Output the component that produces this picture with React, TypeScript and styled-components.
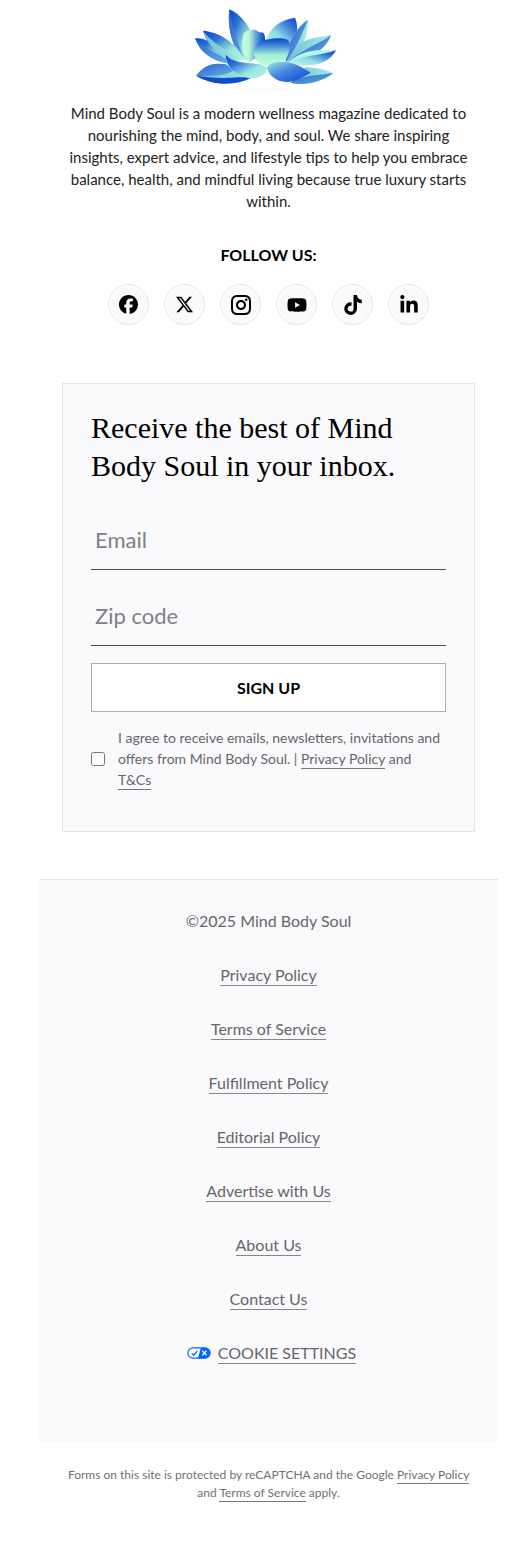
import React from 'react';
import styled, { createGlobalStyle } from 'styled-components';
import { FaFacebook, FaYoutube, FaTiktok, FaLinkedinIn } from 'react-icons/fa6';
import { BsTwitterX } from 'react-icons/bs';
import { RiInstagramLine } from 'react-icons/ri';

const GlobalStyle = createGlobalStyle`
  * { box-sizing: border-box; }
  body {
    margin: 0;
    background: #fff;
    color: #111;
    font-family: Lato, "Open Sans", sans-serif;
  }
`;

const Page = styled.div`
  padding: 8px 34px 45px 39px;
`;

const Intro = styled.header`
  display: flex;
  flex-direction: column;
  align-items: center;
  padding: 0 23px;
`;

const Logo = styled.svg`
  display: block;
  width: 160px;
  height: 86px;
`;

const About = styled.p`
  margin: 8px 0 0;
  font-size: 15px;
  line-height: 22px;
  text-align: center;
  color: #222;
`;

const FollowTitle = styled.h2`
  margin: 32px 0 0;
  font-size: 16px;
  line-height: 22px;
  font-weight: 700;
  color: #000;
`;

const Socials = styled.nav`
  display: flex;
  flex-wrap: wrap;
  justify-content: center;
  gap: 15px;
  margin-top: 18px;
`;

const SocialLink = styled.a`
  display: flex;
  align-items: center;
  justify-content: center;
  width: 41px;
  height: 41px;
  border: 1px solid #e8e8ec;
  border-radius: 50%;
  background: #fafafc;
  color: #000;
`;

const SignupCard = styled.form`
  margin: 58px 23px 0;
  padding: 25px 28px 41px;
  border: 1px solid #e6e6ea;
  background: #fafafc;
`;

const CardTitle = styled.h2`
  margin: 0 0 25px;
  font-family: "Liberation Serif", "Times New Roman", serif;
  font-size: 30px;
  line-height: 38px;
  font-weight: 400;
  color: #000;
`;

const Field = styled.input`
  display: block;
  width: 100%;
  height: 60px;
  margin-top: 16px;
  padding: 0 4px;
  border: 0;
  border-bottom: 1px solid #4c4c50;
  border-radius: 0;
  background: transparent;
  font: 400 22px Lato, sans-serif;
  color: #222;
  outline-offset: 2px;

  &::placeholder {
    color: #808084;
    opacity: 1;
  }
`;

const SubmitButton = styled.button`
  display: block;
  width: 100%;
  height: 49px;
  margin-top: 17px;
  padding: 0;
  border: 1px solid #aeaeb2;
  background: #fff;
  font: 700 16px Lato, sans-serif;
  color: #000;
  cursor: pointer;
`;

const Consent = styled.div`
  display: flex;
  align-items: center;
  gap: 13px;
  margin-top: 15px;
  font-size: 14px;
  line-height: 21px;
  color: #66666a;
`;

const Checkbox = styled.input`
  flex: none;
  width: 14px;
  height: 14px;
  margin: 0;
`;

const TextLink = styled.a`
  padding-bottom: 1px;
  border-bottom: 1px solid #77777b;
  color: inherit;
  text-decoration: none;
`;

const Legal = styled.footer`
  display: flex;
  flex-direction: column;
  align-items: center;
  gap: 32px;
  margin-top: 47px;
  padding: 30px 0 78px;
  border-top: 1px solid #e6e6ea;
  background: #fafafc;
  font-size: 16px;
  line-height: 22px;
  color: #66666a;
`;

const LegalLink = styled.a`
  border-bottom: 1px solid #88888c;
  line-height: 21px;
  color: inherit;
  text-decoration: none;
`;

const CookieRow = styled.div`
  display: flex;
  align-items: center;
  gap: 7px;
  padding-left: 6px;
`;

const Captcha = styled.p`
  margin: 24px 23px 0;
  font-size: 12px;
  line-height: 18px;
  text-align: center;
  color: #707074;
`;

const socials = [
  { name: 'Facebook', icon: <FaFacebook size={19} /> },
  { name: 'X', icon: <BsTwitterX size={17} /> },
  { name: 'Instagram', icon: <RiInstagramLine size={24} /> },
  { name: 'YouTube', icon: <FaYoutube size={20} /> },
  { name: 'TikTok', icon: <FaTiktok size={20} /> },
  { name: 'LinkedIn', icon: <FaLinkedinIn size={20} /> },
];

const legalLinks = [
  'Privacy Policy',
  'Terms of Service',
  'Fulfillment Policy',
  'Editorial Policy',
  'Advertise with Us',
  'About Us',
  'Contact Us',
];

function Lotus() {
  return (
    <Logo viewBox="12 24 480 258" role="img" aria-label="Mind Body Soul">
      <defs>
        <linearGradient id="down" x1="0" y1="0" x2="0" y2="1">
          <stop offset="0" stopColor="#0844d2" />
          <stop offset=".25" stopColor="#3f82d8" />
          <stop offset=".6" stopColor="#a5eed9" />
          <stop offset="1" stopColor="#c2ffda" />
        </linearGradient>
        <linearGradient id="right" x1="0" y1="0" x2="1" y2="0">
          <stop offset="0" stopColor="#c6ffdc" />
          <stop offset=".3" stopColor="#b9f4da" />
          <stop offset=".75" stopColor="#397bd7" />
          <stop offset="1" stopColor="#0740d0" />
        </linearGradient>
        <linearGradient id="fallRight" x1="0" y1="0" x2="1" y2="1">
          <stop offset="0" stopColor="#0743d2" />
          <stop offset=".3" stopColor="#2d70d7" />
          <stop offset=".65" stopColor="#9be5e0" />
          <stop offset="1" stopColor="#b4f4e2" />
        </linearGradient>
        <linearGradient id="riseRight" x1="0" y1="1" x2="1" y2="0">
          <stop offset="0" stopColor="#b4fae4" />
          <stop offset=".4" stopColor="#92dde4" />
          <stop offset=".75" stopColor="#3478d8" />
          <stop offset="1" stopColor="#0743d2" />
        </linearGradient>
        <linearGradient id="lowRight" x1="0" y1="0" x2="1" y2="1">
          <stop offset="0" stopColor="#9be8e8" />
          <stop offset=".45" stopColor="#4286dc" />
          <stop offset="1" stopColor="#0743d2" />
        </linearGradient>
        <linearGradient id="shade" x1="0" y1="0" x2="1" y2="1">
          <stop offset="0" stopColor="#2862ce" />
          <stop offset="1" stopColor="#69ace0" />
        </linearGradient>
        <linearGradient id="pale" x1="0" y1="0" x2="1" y2="0">
          <stop offset="0" stopColor="#6ebbd8" />
          <stop offset="1" stopColor="#a2f0e4" />
        </linearGradient>
      </defs>
      <ellipse cx="242" cy="268" rx="76" ry="6" fill="#fafafa" />
      <path d="M30 115C58 113 80 124 123 166L126 190C85 185 45 158 30 115Z" fill="url(#fallRight)" />
      <path d="M30 115C57 144 91 160 125 174L127 190C84 184 45 158 30 115Z" fill="url(#shade)" />
      <path d="M133 28C164 42 190 70 203 110L194 187C151 163 125 98 133 28Z" fill="url(#fallRight)" />
      <path d="M133 28C141 83 162 126 177 182C146 151 126 92 133 28Z" fill="url(#shade)" />
      <path d="M54 92C102 96 151 126 177 176L160 184C106 181 70 141 54 92Z" fill="url(#fallRight)" />
      <path d="M54 92C77 125 123 150 169 177L153 183C106 178 72 142 54 92Z" fill="url(#pale)" />
      <path d="M330 53C286 59 253 83 242 125L301 143L333 117C338 92 338 72 330 53Z" fill="url(#riseRight)" />
      <path d="M369 59C337 77 318 111 302 185C343 164 371 112 369 59Z" fill="url(#pale)" />
      <path d="M369 59C335 82 306 128 301 190C336 141 350 104 369 59Z" fill="url(#shade)" />
      <path d="M438 105C401 113 367 113 346 131L304 190C357 179 423 153 438 105Z" fill="url(#pale)" />
      <path d="M438 105C405 132 357 143 307 188C367 177 420 156 438 105Z" fill="url(#shade)" />
      <path d="M453 151C413 149 364 145 322 177L307 188C375 207 430 193 453 151Z" fill="#b5f5e3" />
      <path d="M453 151C410 166 357 166 307 188C374 205 430 195 453 151Z" fill="url(#riseRight)" />
      <path d="M33 227C56 199 81 186 121 193C165 199 199 217 202 232C148 260 82 254 33 227Z" fill="url(#pale)" />
      <path d="M33 227C66 230 99 237 158 232L202 232C146 262 79 255 33 227Z" fill="#104dce" />
      <path d="M33 227C56 199 81 186 121 193L147 211C122 230 72 229 33 227Z" fill="url(#shade)" />
      <path d="M122 171C153 193 208 182 247 203C235 244 182 242 149 215C131 204 124 188 122 171Z" fill="#a2ebdd" />
      <path d="M122 164C139 184 168 189 209 191C234 192 245 199 245 211C236 240 184 241 151 217C131 203 123 184 122 164Z" fill="url(#fallRight)" />
      <path d="M176 101C182 90 194 94 204 89C214 87 218 100 232 97C248 106 239 146 221 170L194 185C175 172 166 134 176 101Z" fill="url(#right)" />
      <path d="M221 128C240 116 286 110 307 119C326 132 306 177 293 191L245 198L221 188C203 174 202 146 221 128Z" fill="url(#down)" />
      <path d="M362 202C391 203 418 208 445 219C408 248 360 257 316 248C330 234 344 216 362 202Z" fill="url(#pale)" />
      <path d="M445 219C402 226 354 225 316 248C361 258 409 247 445 219Z" fill="url(#shade)" />
      <path d="M246 202C261 179 313 183 344 198L378 218C344 236 322 251 289 244C267 239 248 221 246 202Z" fill="url(#lowRight)" />
    </Logo>
  );
}

function ConsentToggleIcon() {
  return (
    <svg width="24" height="12" viewBox="0 0 28 14" aria-hidden="true">
      <path d="M7 1h14a6 6 0 0 1 0 12H7A6 6 0 0 1 7 1Z" fill="#fff" stroke="#06f" strokeWidth="1.4" />
      <path d="M16.2 1H21a6 6 0 0 1 0 12h-8.2Z" fill="#06f" />
      <path d="m5.5 7.2 2.4 2.4L12 4.5" fill="none" stroke="#06f" strokeWidth="1.4" />
      <path d="m17.8 4.4 5 5.2m0-5.2-5 5.2" stroke="#fff" strokeWidth="1.4" />
    </svg>
  );
}

export default function App() {
  return (
    <>
      <GlobalStyle />
      <Page>
        <Intro>
          <Lotus />
          <About>
            Mind Body Soul is a modern wellness magazine dedicated to nourishing the mind, body,
            and soul. We share inspiring insights, expert advice, and lifestyle tips to help you
            embrace balance, health, and mindful living because true luxury starts within.
          </About>
          <FollowTitle>FOLLOW US:</FollowTitle>
          <Socials aria-label="Social media">
            {socials.map(({ name, icon }) => (
              <SocialLink key={name} href="#" aria-label={name}>
                {icon}
              </SocialLink>
            ))}
          </Socials>
        </Intro>
        <SignupCard onSubmit={(event) => event.preventDefault()}>
          <CardTitle>Receive the best of Mind Body Soul in your inbox.</CardTitle>
          <Field type="email" placeholder="Email" aria-label="Email" />
          <Field type="text" placeholder="Zip code" aria-label="Zip code" />
          <SubmitButton type="submit">SIGN UP</SubmitButton>
          <Consent>
            <Checkbox type="checkbox" id="consent" />
            <label htmlFor="consent">
              I agree to receive emails, newsletters, invitations and offers from Mind Body Soul. |{' '}
              <TextLink href="#">Privacy Policy</TextLink> and <TextLink href="#">T&amp;Cs</TextLink>
            </label>
          </Consent>
        </SignupCard>
        <Legal>
          <span>©2025 Mind Body Soul</span>
          {legalLinks.map((label) => (
            <LegalLink key={label} href="#">
              {label}
            </LegalLink>
          ))}
          <CookieRow>
            <ConsentToggleIcon />
            <LegalLink href="#">COOKIE SETTINGS</LegalLink>
          </CookieRow>
        </Legal>
        <Captcha>
          Forms on this site is protected by reCAPTCHA and the Google{' '}
          <TextLink href="#">Privacy Policy</TextLink> and{' '}
          <TextLink href="#">Terms of Service</TextLink> apply.
        </Captcha>
      </Page>
    </>
  );
}
